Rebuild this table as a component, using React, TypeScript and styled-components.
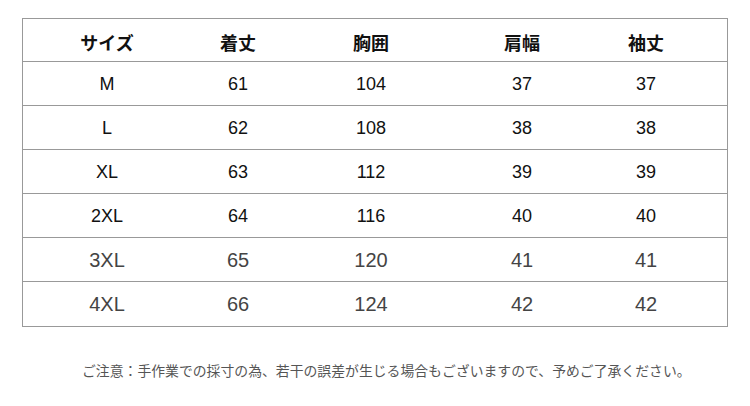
import React from 'react';
import styled, { createGlobalStyle } from 'styled-components';

const GlobalStyle = createGlobalStyle`
  html, body {
    margin: 0;
    padding: 0;
    background: #ffffff;
  }
  body {
    font-family: "Liberation Sans", "Noto Sans CJK JP", sans-serif;
  }
`;

const headers = ['サイズ', '着丈', '胸囲', '肩幅', '袖丈'];

const rows = [
  { cells: ['M', '61', '104', '37', '37'], light: false },
  { cells: ['L', '62', '108', '38', '38'], light: false },
  { cells: ['XL', '63', '112', '39', '39'], light: false },
  { cells: ['2XL', '64', '116', '40', '40'], light: false },
  { cells: ['3XL', '65', '120', '41', '41'], light: true },
  { cells: ['4XL', '66', '124', '42', '42'], light: true },
];

const App: React.FC = () => {
  return (
    <Page>
      <GlobalStyle />
      <Table>
        <Row $height={43}>
          {headers.map((h) => (
            <HeadCell key={h}>{h}</HeadCell>
          ))}
        </Row>
        {rows.map((r, i) => (
          <Row key={r.cells[0]} $height={44} $last={i === rows.length - 1}>
            {r.cells.map((c, j) => (
              <Cell key={j} $light={r.light}>
                {c}
              </Cell>
            ))}
          </Row>
        ))}
      </Table>
      <Note>ご注意：手作業での採寸の為、若干の誤差が生じる場合もございますので、予めご了承ください。</Note>
    </Page>
  );
};

const Page = styled.div`
  width: 750px;
  height: 406px;
  box-sizing: border-box;
  padding: 18px 22px 0 22px;
  display: flex;
  flex-direction: column;
`;

const Table = styled.div`
  width: 706px;
  border: 1px solid #999999;
  box-sizing: border-box;
  display: flex;
  flex-direction: column;
`;

const Row = styled.div<{ $height: number; $last?: boolean }>`
  display: grid;
  grid-template-columns: 168px 94px 172px 130px 118px;
  height: ${(p) => p.$height}px;
  box-sizing: border-box;
  border-bottom: ${(p) => (p.$last ? 'none' : '1px solid #999999')};
  align-items: center;
`;

const HeadCell = styled.div`
  text-align: center;
  padding-top: 3px;
  font-family: "Noto Sans CJK JP", sans-serif;
  font-weight: 700;
  font-size: 18px;
  color: #111111;
`;

const Cell = styled.div<{ $light: boolean }>`
  text-align: center;
  padding-top: 1px;
  font-size: ${(p) => (p.$light ? '20px' : '18px')};
  color: ${(p) => (p.$light ? '#444444' : '#111111')};
`;

const Note = styled.div`
  margin-top: 33px;
  padding-left: 60px;
  font-family: "Noto Sans CJK JP", sans-serif;
  font-size: 13.85px;
  color: #555555;
  white-space: nowrap;
`;

export default App;
